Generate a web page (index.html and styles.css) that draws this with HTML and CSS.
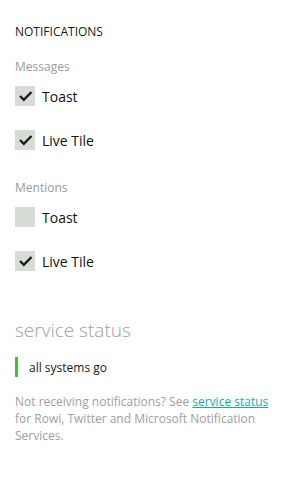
FILE: index.html
```html
<!DOCTYPE html>
<html lang="en">
<head>
    <meta charset="UTF-8">
    <meta name="viewport" content="width=device-width, initial-scale=1.0">
    <title>Notifications</title>
    <link rel="stylesheet" href="styles.css">
</head>
<body>
    <div class="page">
        <h1 class="section-title">NOTIFICATIONS</h1>

        <div class="group-label messages">Messages</div>
        <label class="check-row">
            <span class="box checked">
                <svg viewBox="0 0 20 20" width="20" height="20"><path d="M5 10 L8.8 13.8 L16.5 6" fill="none" stroke="#1a1a1a" stroke-width="2.3"/></svg>
            </span>
            <span class="check-text">Toast</span>
        </label>
        <label class="check-row">
            <span class="box checked">
                <svg viewBox="0 0 20 20" width="20" height="20"><path d="M5 10 L8.8 13.8 L16.5 6" fill="none" stroke="#1a1a1a" stroke-width="2.3"/></svg>
            </span>
            <span class="check-text">Live Tile</span>
        </label>

        <div class="group-label mentions">Mentions</div>
        <label class="check-row">
            <span class="box"></span>
            <span class="check-text">Toast</span>
        </label>
        <label class="check-row">
            <span class="box checked">
                <svg viewBox="0 0 20 20" width="20" height="20"><path d="M5 10 L8.8 13.8 L16.5 6" fill="none" stroke="#1a1a1a" stroke-width="2.3"/></svg>
            </span>
            <span class="check-text">Live Tile</span>
        </label>

        <h2 class="status-title">service status</h2>
        <div class="status-row">
            <span class="status-bar"></span>
            <span class="status-text">all systems go</span>
        </div>
        <p class="note">Not receiving notifications? See <a href="#">service status</a> for Rowi, Twitter and Microsoft Notification Services.</p>
    </div>
</body>
</html>
```

FILE: styles.css
```css
body {
    font-family: 'Open Sans', 'Noto Sans', sans-serif;
    margin: 0;
    padding: 0;
    background-color: #fff;
    color: #1a1a1a;
}

.page {
    padding: 22px 15px 0 15px;
}

.section-title {
    margin: 0;
    font-size: 12px;
    font-weight: 400;
    line-height: 20px;
    color: #1a1a1a;
}

.group-label {
    margin-top: 16px;
    font-size: 12px;
    line-height: 18px;
    color: #9a9a9a;
}

.group-label.messages {
    margin-bottom: -2px;
}

.group-label.mentions {
    margin-top: 17px;
    margin-bottom: -2px;
}

.check-row {
    display: flex;
    align-items: center;
    height: 44px;
}

.box {
    width: 20px;
    height: 20px;
    background-color: #d7dcd6;
    display: flex;
}

.check-text {
    margin-left: 7px;
    font-size: 14px;
    color: #111;
}

.status-title {
    margin: 34px 0 0 0;
    font-size: 19px;
    font-weight: 300;
    line-height: 26px;
    color: #a0a0a0;
}

.status-row {
    display: flex;
    align-items: center;
    height: 20px;
    margin-top: 14px;
}

.status-bar {
    width: 3px;
    height: 20px;
    background-color: #2ecc30;
}

.status-text {
    margin-left: 11px;
    font-size: 12px;
    color: #1a1a1a;
}

.note {
    margin: 16px 0 0 0;
    font-size: 12px;
    line-height: 17px;
    color: #a0a0a0;
}

.note a {
    color: #1ba7ad;
}
```
